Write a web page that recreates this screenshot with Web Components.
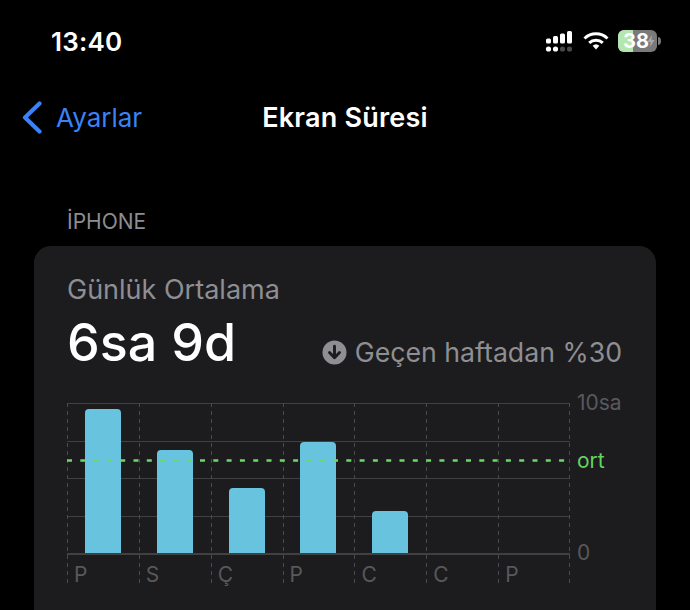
<!DOCTYPE html>
<html lang="tr">
<head>
<meta charset="utf-8">
<title>Ekran Süresi</title>
<style>
  html, body { margin: 0; height: 610px; overflow: hidden; background: #000; font-family: Inter, "Noto Sans", sans-serif; color: #fff; }
</style>
</head>
<body>
<status-bar time="13:40" battery="38"></status-bar>
<nav-bar back="Ayarlar" title="Ekran Süresi"></nav-bar>
<section-title>İPHONE</section-title>
<usage-card heading="Günlük Ortalama" total="6sa 9d" trend="Geçen haftadan %30">
  <week-chart>
    <day-bar value="144" label="P"></day-bar>
    <day-bar value="103" label="S"></day-bar>
    <day-bar value="65" label="Ç"></day-bar>
    <day-bar value="111" label="P"></day-bar>
    <day-bar value="42" label="C"></day-bar>
    <day-bar value="0" label="C"></day-bar>
    <day-bar value="0" label="P"></day-bar>
  </week-chart>
</usage-card>

<script>
class StatusBar extends HTMLElement {
  constructor() {
    super();
    this.attachShadow({ mode: 'open' });
  }
  connectedCallback() {
    const level = this.getAttribute('battery');
    this.shadowRoot.innerHTML = `
    <style>
      :host { display: flex; align-items: center; justify-content: space-between; height: 83px; padding: 0 29px 0 51px; box-sizing: border-box; }
      .time { font-size: 26px; font-weight: 600; letter-spacing: .2px; }
      .icons { display: flex; align-items: center; gap: 9px; margin-top: -1px; }
      svg { display: block; }
      .battery { position: relative; width: 39px; height: 22px; border-radius: 6px; overflow: hidden; background: #7a7a7a; font-size: 20px; font-weight: 700; line-height: 22px; text-align: center; }
      .fill { position: absolute; left: 0; top: 0; bottom: 0; width: 38%; background: #b4e6b0; }
      .num { position: absolute; left: 3px; width: 30px; top: 0; color: #fff; }
      .bolt { position: absolute; right: 2px; top: 5px; }
      .wrap { display: flex; align-items: center; gap: 1px; }
    </style>
    <span class="time">${this.getAttribute('time')}</span>
    <span class="icons">
      <svg width="29" height="22" viewBox="0 0 29 22" fill="#fff">
        <rect x="1" y="8.5" width="5" height="5" rx="1.5"/>
        <rect x="8" y="6" width="5" height="7.5" rx="1.5"/>
        <rect x="15" y="3.5" width="5" height="10" rx="1.5"/>
        <rect x="22" y="1" width="5" height="12.5" rx="1.5"/>
        <circle cx="3.5" cy="19" r="2.6"/>
        <circle cx="10.5" cy="19" r="2.6"/>
        <circle cx="17.5" cy="19" r="2.6" fill="#4a4a4a"/>
        <circle cx="24.5" cy="19" r="2.6" fill="#4a4a4a"/>
      </svg>
      <svg width="26" height="20" viewBox="0 0 26 20">
        <path d="M1.5 7.5 A16.5 16.5 0 0 1 24.5 7.5" fill="none" stroke="#fff" stroke-width="3"/>
        <path d="M6.2 11.8 A10 10 0 0 1 19.8 11.8" fill="none" stroke="#fff" stroke-width="3"/>
        <path d="M9.6 14.8 A5 5 0 0 1 16.4 14.8 L13 18.6 Z" fill="#fff"/>
      </svg>
      <span class="wrap">
        <span class="battery">
          <span class="fill"></span>
          <span class="num">${level}</span>
          <svg class="bolt" width="8" height="12" viewBox="0 0 8 12"><path d="M5 0 L0.5 7 H3.5 L3 12 L7.5 5 H4.5 Z" fill="#a8a8a8"/></svg>
        </span>
        <svg width="3" height="8" viewBox="0 0 3 8"><path d="M0 0 A3 4 0 0 1 0 8 Z" fill="#7a7a7a"/></svg>
      </span>
    </span>`;
  }
}

class NavBar extends HTMLElement {
  constructor() {
    super();
    this.attachShadow({ mode: 'open' });
  }
  connectedCallback() {
    this.shadowRoot.innerHTML = `
    <style>
      :host { display: grid; grid-template-columns: 1fr auto 1fr; align-items: center; height: 68px; padding: 0 22px; }
      .back { display: flex; align-items: center; gap: 14px; color: #3a82f7; font-size: 26px; }
      svg { display: block; }
      .title { font-size: 27px; font-weight: 600; letter-spacing: .2px; }
    </style>
    <span class="back">
      <svg width="20" height="33" viewBox="0 0 20 33"><path d="M17.5 2.5 L3 16.5 L17.5 30.5" fill="none" stroke="#3a82f7" stroke-width="4.2" stroke-linecap="round" stroke-linejoin="round"/></svg>
      <span>${this.getAttribute('back')}</span>
    </span>
    <span class="title">${this.getAttribute('title')}</span>
    <span></span>`;
  }
}

class SectionTitle extends HTMLElement {
  constructor() {
    super();
    this.attachShadow({ mode: 'open' });
    this.shadowRoot.innerHTML = `
    <style>
      :host { display: block; margin-top: 59px; height: 36px; padding-left: 67px; box-sizing: border-box; font-size: 21px; line-height: 24px; color: #8d8d92; }
    </style>
    <slot></slot>`;
  }
}

class UsageCard extends HTMLElement {
  constructor() {
    super();
    this.attachShadow({ mode: 'open' });
  }
  connectedCallback() {
    this.shadowRoot.innerHTML = `
    <style>
      :host { display: block; margin: 0 34px; height: 364px; padding: 28px 34px 0 33px; box-sizing: border-box; background: #1c1c1e; border-radius: 17px 17px 0 0; }
      .heading { font-size: 27px; line-height: 32px; color: #8e8e93; }
      .row { display: flex; align-items: center; justify-content: space-between; height: 62px; margin-top: 5px; }
      .total { font-size: 52px; font-weight: 500; }
      .trend { display: flex; align-items: center; gap: 8px; font-size: 26.7px; color: #8e8e93; margin-top: 20px; }
      svg { display: block; }
      slot { display: block; margin-top: 30px; }
    </style>
    <div class="heading">${this.getAttribute('heading')}</div>
    <div class="row">
      <span class="total">${this.getAttribute('total')}</span>
      <span class="trend">
        <svg width="25" height="25" viewBox="0 0 26 26">
          <circle cx="13" cy="13" r="12.5" fill="#8e8e93"/>
          <path d="M13 6.5 V18 M7.8 13 L13 18.5 L18.2 13" fill="none" stroke="#1c1c1e" stroke-width="3" stroke-linecap="round" stroke-linejoin="round"/>
        </svg>
        <span>${this.getAttribute('trend')}</span>
      </span>
    </div>
    <slot></slot>`;
  }
}

class WeekChart extends HTMLElement {
  constructor() {
    super();
    this.attachShadow({ mode: 'open' });
    this.shadowRoot.innerHTML = `
    <style>
      :host { display: grid; grid-template-columns: 503px auto; column-gap: 7px; height: 184px; }
      .plot { display: grid; height: 184px; }
      .plot > * { grid-area: 1 / 1; }
      .lines { height: 150px; display: grid; grid-template-rows: repeat(4, 1fr); border-bottom: 2px solid #414143; }
      .lines div { border-top: 1px solid #414143; }
      .days { display: grid; grid-template-columns: repeat(7, 1fr); background: repeating-linear-gradient(to bottom, #4a4a4c 0 4px, transparent 4px 8px) right top / 1px 100% no-repeat; }
      .avg { align-self: start; margin-top: 56px; display: block; }
      .scale { position: relative; font-size: 21px; line-height: 24px; color: #58585b; }
      .scale span { position: absolute; left: 0; }
      .scale .ort { color: #64d261; }
    </style>
    <div class="plot">
      <div class="lines"><div></div><div></div><div></div><div></div></div>
      <div class="days"><slot></slot></div>
      <svg class="avg" width="503" height="4"><line x1="0" y1="1.5" x2="503" y2="1.5" stroke="#6ad968" stroke-width="2.4" stroke-dasharray="5 8.3"/></svg>
    </div>
    <div class="scale">
      <span style="top:-12px">10sa</span>
      <span class="ort" style="top:46px">ort</span>
      <span style="top:138px">0</span>
    </div>`;
  }
}

class DayBar extends HTMLElement {
  constructor() {
    super();
    this.attachShadow({ mode: 'open' });
  }
  connectedCallback() {
    const value = Number(this.getAttribute('value'));
    this.shadowRoot.innerHTML = `
    <style>
      :host { display: grid; grid-template-rows: 150px 1fr; min-width: 0; background: repeating-linear-gradient(to bottom, #4a4a4c 0 4px, transparent 4px 8px) left top / 1px 100% no-repeat; }
      .track { display: flex; align-items: flex-end; justify-content: center; }
      .bar { width: 36px; height: ${value}px; background: #67c3de; border-radius: 4px 4px 0 0; }
      .label { padding: 10px 0 0 7px; font-size: 21px; line-height: 24px; color: #58585b; }
    </style>
    <div class="track"><div class="bar"></div></div>
    <div class="label">${this.getAttribute('label')}</div>`;
  }
}

customElements.define('status-bar', StatusBar);
customElements.define('nav-bar', NavBar);
customElements.define('section-title', SectionTitle);
customElements.define('usage-card', UsageCard);
customElements.define('week-chart', WeekChart);
customElements.define('day-bar', DayBar);
</script>
</body>
</html>
